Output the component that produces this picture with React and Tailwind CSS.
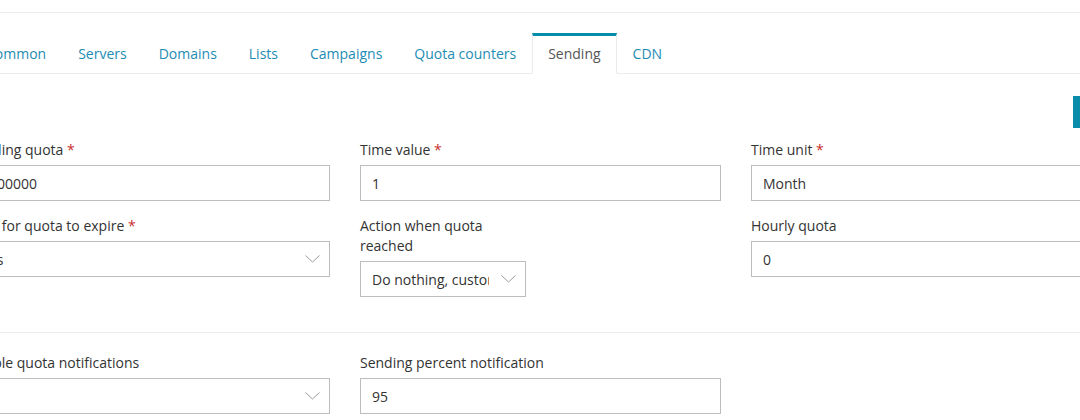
import React from "react";

const Chevron = () => (
  <svg width="15" height="8" viewBox="0 0 15 8" fill="none" className="shrink-0">
    <path d="M0.5 0.5 L7.5 7 L14.5 0.5" stroke="#9a9a9a" strokeWidth="1" />
  </svg>
);

const Label = ({ children, req }) => (
  <div className="text-[14px] leading-[20px] text-[#333] mb-[5px]">
    {children}
    {req && <span className="text-[#c9302c]"> *</span>}
  </div>
);

const Input = ({ value, className = "" }) => (
  <div
    className={
      "h-[36px] border border-[#bdbdbd] bg-white flex items-center px-[11px] text-[14px] text-[#333] overflow-hidden whitespace-nowrap " +
      className
    }
  >
    {value}
  </div>
);

const Select = ({ value, className = "" }) => (
  <div
    className={
      "h-[36px] border border-[#bdbdbd] bg-white flex items-center pl-[11px] pr-[9px] text-[14px] text-[#333] " +
      className
    }
  >
    <div className="flex-1 overflow-hidden whitespace-nowrap">{value}</div>
    <div className="pl-[12px]">
      <Chevron />
    </div>
  </div>
);

const tabs = ["Common", "Servers", "Domains", "Lists", "Campaigns", "Quota counters", "Sending", "CDN"];

export default function App() {
  return (
    <div
      className="w-[1080px] h-[420px] overflow-hidden bg-white"
      style={{ fontFamily: "'Open Sans', 'Noto Sans', sans-serif" }}
    >
      <div className="h-[13px] border-b border-[#ebebeb]" />
      <div className="ml-[-31px] w-[1184px]">
        <div className="mt-[20px] flex border-b border-[#ebebeb] w-[1111px] pl-px">
          {tabs.map((t) =>
            t === "Sending" ? (
              <div
                key={t}
                className="px-[15px] pt-[8px] pb-[9px] border-t-[3px] border-t-[#078ca9] border-x border-x-[#ebebeb] -mb-px border-b border-b-white bg-white text-[14px] leading-[20px] text-[#555]"
              >
                {t}
              </div>
            ) : (
              <div
                key={t}
                className="px-4 pt-[8px] pb-[9px] border-t-[3px] border-t-transparent text-[14px] leading-[20px] text-[#1d8cb3]"
              >
                {t}
              </div>
            )
          )}
        </div>
        <div className="mt-[22px] flex justify-end">
          <div className="w-[80px] h-[32px] bg-[#0a8dab]" />
        </div>
        <div className="mt-[12px] grid grid-cols-[361px_361px_361px] gap-x-[30px] gap-y-[15px] items-start">
          <div>
            <Label req>Sending quota</Label>
            <Input value="1000000" />
          </div>
          <div>
            <Label req>Time value</Label>
            <Input value="1" />
          </div>
          <div>
            <Label req>Time unit</Label>
            <Input value="Month" />
          </div>
          <div>
            <Label req>Wait for quota to expire</Label>
            <Select value="Yes" />
          </div>
          <div>
            <div className="w-[170px]">
              <Label>Action when quota reached</Label>
            </div>
            <Select value="Do nothing, customer is notified" className="w-[166px]" />
          </div>
          <div>
            <Label>Hourly quota</Label>
            <Input value="0" />
          </div>
        </div>
        <div className="mt-[35px] border-t border-[#ebebeb]" />
        <div className="mt-[20px] grid grid-cols-[361px_361px_361px] gap-x-[30px] items-start">
          <div>
            <Label>Enable quota notifications</Label>
            <Select value="" />
          </div>
          <div>
            <Label>Sending percent notification</Label>
            <Input value="95" />
          </div>
        </div>
      </div>
    </div>
  );
}
